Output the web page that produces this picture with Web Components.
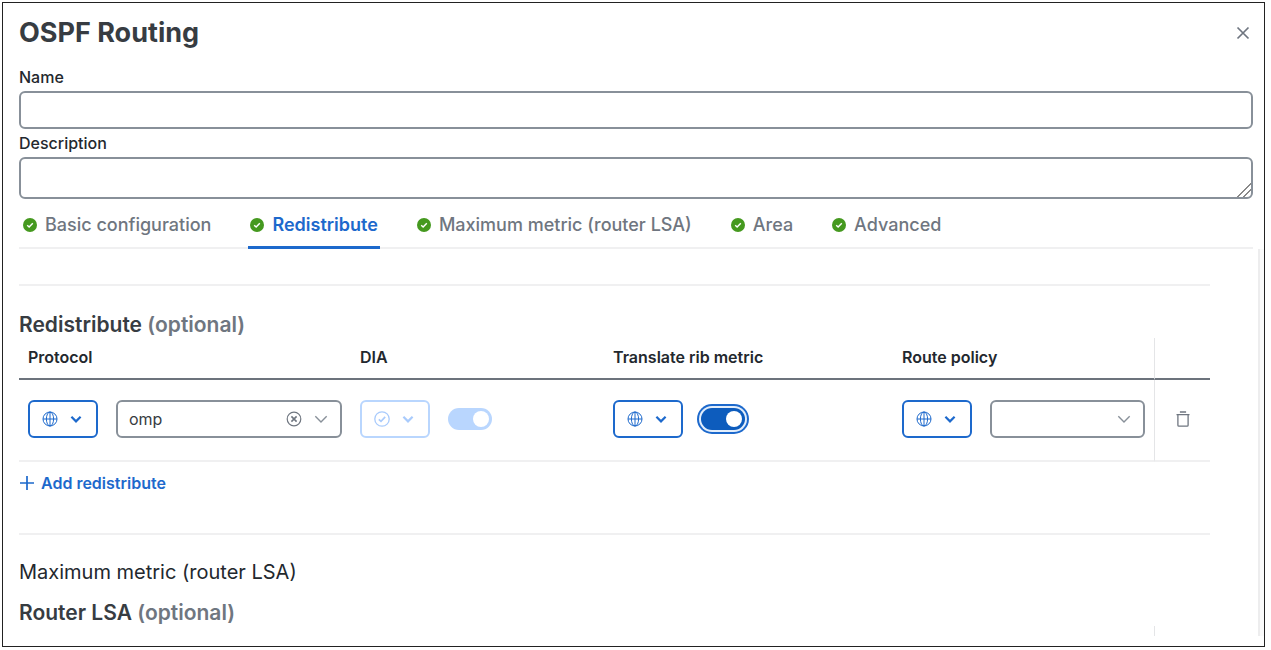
<!DOCTYPE html>
<html lang="en">
<head>
  <meta charset="utf-8">
  <title>OSPF Routing</title>
  <style>
    body {
      --blue: #1d69cc;
      --blue-dark: #0d5cbd;
      --blue-light: #b9d6fe;
      --gray: #889099;
      --line: #f0f0f1;
      --text: #23282e;
      --muted: #6f7680;
      margin: 2px 6px 3px 2px;
      background: #fff;
      color: var(--text);
      font-family: Inter, "Liberation Sans", sans-serif;
    }
  </style>
</head>
<body>
  <ospf-dialog heading="OSPF Routing">
    <form-field slot="fields" label="Name"></form-field>
    <form-field slot="fields" label="Description" multiline></form-field>

    <status-tab slot="tabs">Basic configuration</status-tab>
    <status-tab slot="tabs" active>Redistribute</status-tab>
    <status-tab slot="tabs">Maximum metric (router LSA)</status-tab>
    <status-tab slot="tabs">Area</status-tab>
    <status-tab slot="tabs">Advanced</status-tab>

    <redistribute-section></redistribute-section>
    <metric-section></metric-section>
  </ospf-dialog>

  <script>
    const ICONS = {
      check: '<circle cx="8" cy="8" r="8" fill="#45991f" stroke="none"/><path d="M4.8 8.3l2.2 2.1 4.2-4.5" stroke="#fff" stroke-width="1.6"/>',
      checkCircle: '<circle cx="8" cy="8" r="7.2" stroke-width="1.3"/><path d="M4.8 8.3l2.2 2.1 4.2-4.5" stroke-width="1.6"/>',
      globe: '<circle cx="8" cy="8" r="7"/><ellipse cx="8" cy="8" rx="3.6" ry="7"/><path d="M1 8h14M8 1v14"/>',
      chevron: '<path d="M3.4 5.8L8 10.4l4.6-4.6" stroke-width="2.2"/>',
      chevronThin: '<path d="M1.5 4.8L8 11.3l6.5-6.5" stroke-width="1.6"/>',
      clear: '<circle cx="8" cy="8" r="6.8" stroke-width="1.2"/><path d="M5.4 5.4l5.2 5.2M10.6 5.4l-5.2 5.2" stroke-width="1.6"/>',
      close: '<path d="M2.5 2.5l11 11M13.5 2.5l-11 11" stroke-width="1.7"/>',
      plus: '<path d="M8 1v14M1 8h14" stroke-width="1.7"/>',
      trash: '<path d="M2.9 3.8v10.4a1 1 0 0 0 1 1h8.2a1 1 0 0 0 1-1V3.8M1.5 3.6h13M4.9 1h6.2" stroke-width="1.3"/>'
    };

    class UiIcon extends HTMLElement {
      constructor() {
        super();
        this.attachShadow({ mode: 'open' });
      }

      connectedCallback() {
        const size = this.getAttribute('size') || 16;
        this.shadowRoot.innerHTML = `
          <style>
            :host { display: inline-flex; flex: none; }
            svg { display: block; }
          </style>
          <svg width="${size}" height="${size}" viewBox="0 0 16 16" fill="none" stroke="currentColor" aria-hidden="true">
            ${ICONS[this.getAttribute('name')]}
          </svg>
        `;
      }
    }

    class OspfDialog extends HTMLElement {
      constructor() {
        super();
        const shadow = this.attachShadow({ mode: 'open' });
        shadow.innerHTML = `
          <style>
            :host {
              display: flex;
              flex-direction: column;
              box-sizing: border-box;
              min-height: calc(100vh - 5px);
              border: 1px solid #222;
              padding-bottom: 10px;
            }
            header {
              display: flex;
              align-items: center;
              justify-content: space-between;
              padding: 12px 13px 12px 16px;
            }
            h1 {
              margin: 0;
              font-size: 27px;
              line-height: 36px;
              font-weight: 700;
              color: #373c42;
            }
            button {
              display: flex;
              padding: 0;
              border: 0;
              background: none;
              color: var(--muted);
            }
            .fields {
              padding: 0 11px 0 16px;
            }
            nav {
              display: flex;
              gap: 35px;
              margin: 0 11px 0 16px;
              padding-left: 2px;
              border-bottom: 2px solid var(--line);
            }
            .body {
              display: flex;
              flex: 1;
            }
            .content {
              flex: 1;
              padding: 35px 48px 0 16px;
            }
            .track {
              width: 4px;
              background: #fafafa;
              border-left: 2px solid #ededee;
            }
          </style>
          <header>
            <h1>${this.getAttribute('heading')}</h1>
            <button type="button" aria-label="Close"><ui-icon name="close"></ui-icon></button>
          </header>
          <div class="fields"><slot name="fields"></slot></div>
          <nav role="tablist"><slot name="tabs"></slot></nav>
          <div class="body">
            <div class="content"><slot></slot></div>
            <div class="track"></div>
          </div>
        `;
      }
    }

    class FormField extends HTMLElement {
      constructor() {
        super();
        const shadow = this.attachShadow({ mode: 'open' });
        const control = this.hasAttribute('multiline')
          ? '<textarea id="control"></textarea>'
          : '<input id="control" type="text">';
        shadow.innerHTML = `
          <style>
            :host { display: block; }
            label {
              display: block;
              padding: 4px 0;
              font-size: 16px;
              line-height: 20px;
              font-weight: 550;
            }
            input, textarea {
              display: block;
              box-sizing: border-box;
              width: 100%;
              height: 38px;
              padding: 4px 12px;
              border: 2px solid var(--gray);
              border-radius: 6px;
              background: #fff;
              color: inherit;
              font: inherit;
            }
            textarea { height: 42px; }
            textarea::-webkit-resizer {
              background: linear-gradient(135deg, transparent 52%, #888 53%, #888 58%, transparent 59%,
                transparent 72%, #888 73%, #888 78%, transparent 79%);
            }
          </style>
          <label for="control">${this.getAttribute('label')}</label>
          ${control}
        `;
      }
    }

    class StatusTab extends HTMLElement {
      constructor() {
        super();
        const shadow = this.attachShadow({ mode: 'open' });
        shadow.innerHTML = `
          <style>
            :host {
              display: block;
              margin-bottom: -2px;
              border-bottom: 3px solid transparent;
              color: var(--muted);
              font-weight: 550;
            }
            :host([active]) {
              border-color: var(--blue);
              color: var(--blue);
              font-weight: 600;
            }
            button {
              display: flex;
              align-items: center;
              gap: 8px;
              padding: 14px 2px 9px 2px;
              border: 0;
              background: none;
              color: inherit;
              font: inherit;
              font-size: 18px;
              line-height: 24px;
              white-space: nowrap;
            }
          </style>
          <button type="button" role="tab" aria-selected="${this.hasAttribute('active')}">
            <ui-icon name="check" size="14"></ui-icon><slot></slot>
          </button>
        `;
      }
    }

    class ScopeButton extends HTMLElement {
      constructor() {
        super();
        const shadow = this.attachShadow({ mode: 'open' });
        const disabled = this.hasAttribute('disabled');
        shadow.innerHTML = `
          <style>
            :host { display: block; flex: none; }
            button {
              display: flex;
              align-items: center;
              justify-content: space-between;
              box-sizing: border-box;
              width: 70px;
              height: 38px;
              padding: 0 12px;
              border: 2px solid var(--blue);
              border-radius: 6px;
              background: #fff;
              color: var(--blue);
            }
            button:disabled {
              border-color: var(--blue-light);
              color: #a9cbfc;
            }
          </style>
          <button type="button" aria-haspopup="menu" aria-label="Value scope" ${disabled ? 'disabled' : ''}>
            <ui-icon name="${disabled ? 'checkCircle' : 'globe'}"></ui-icon>
            <ui-icon name="chevron"></ui-icon>
          </button>
        `;
      }
    }

    class SelectBox extends HTMLElement {
      constructor() {
        super();
        const shadow = this.attachShadow({ mode: 'open' });
        const value = this.getAttribute('value') || '';
        shadow.innerHTML = `
          <style>
            :host {
              display: flex;
              flex: 1;
              align-items: center;
              gap: 12px;
              box-sizing: border-box;
              min-width: 0;
              height: 38px;
              padding: 0 12px 0 11px;
              border: 2px solid var(--gray);
              border-radius: 6px;
              color: var(--gray);
            }
            select {
              flex: 1;
              min-width: 0;
              height: 100%;
              padding: 0;
              border: 0;
              appearance: none;
              background: none;
              color: #373c42;
              font: 400 16px/20px Inter, "Liberation Sans", sans-serif;
            }
            button {
              display: flex;
              padding: 0;
              border: 0;
              background: none;
              color: var(--muted);
            }
          </style>
          <select aria-label="${this.getAttribute('label')}"><option>${value}</option></select>
          ${value ? '<button type="button" aria-label="Clear"><ui-icon name="clear"></ui-icon></button>' : ''}
          <ui-icon name="chevronThin" size="14"></ui-icon>
        `;
      }
    }

    class ToggleSwitch extends HTMLElement {
      constructor() {
        super();
        const shadow = this.attachShadow({ mode: 'open' });
        shadow.innerHTML = `
          <style>
            :host { display: block; flex: none; }
            input {
              display: flex;
              align-items: center;
              justify-content: flex-end;
              box-sizing: border-box;
              width: 44px;
              height: 22px;
              margin: 0;
              padding: 0 3px;
              border-radius: 11px;
              appearance: none;
              background: var(--blue-dark);
            }
            input::before {
              content: "";
              width: 16px;
              height: 16px;
              border-radius: 50%;
              background: #fff;
            }
            input:disabled { background: var(--blue-light); }
            :host([highlight]) input {
              box-shadow: 0 0 0 2px #e3eefb, 0 0 0 4px var(--blue);
            }
          </style>
          <input type="checkbox" role="switch" checked aria-label="${this.getAttribute('label')}"
            ${this.hasAttribute('disabled') ? 'disabled' : ''}>
        `;
      }
    }

    class SectionHeading extends HTMLElement {
      constructor() {
        super();
        const shadow = this.attachShadow({ mode: 'open' });
        shadow.innerHTML = `
          <style>
            :host { display: block; }
            h2 {
              margin: 0;
              font-size: 21px;
              line-height: 26px;
              font-weight: 600;
              color: #373c42;
            }
            span { color: var(--muted); }
          </style>
          <h2><slot></slot> <span>(optional)</span></h2>
        `;
      }
    }

    class RedistributeSection extends HTMLElement {
      constructor() {
        super();
        const shadow = this.attachShadow({ mode: 'open' });
        shadow.innerHTML = `
          <style>
            :host {
              display: block;
              padding: 26px 0 39px;
              border-top: 2px solid var(--line);
            }
            table {
              width: 100%;
              table-layout: fixed;
              border-collapse: separate;
              border-spacing: 0;
            }
            .protocol { width: 332px; }
            .dia { width: 253px; }
            .metric { width: 289px; }
            .actions { width: 56px; }
            th {
              padding: 9px 9px 10px;
              border-bottom: 2px solid #6c737c;
              font-size: 16px;
              line-height: 21px;
              font-weight: 600;
              text-align: left;
            }
            td {
              height: 78px;
              padding: 0 9px 2px;
              border-bottom: 2px solid var(--line);
            }
            th:last-child, td:last-child {
              border-left: 1px solid #e4e5e7;
            }
            .cell {
              display: flex;
              align-items: center;
              gap: 18px;
            }
            button {
              display: flex;
              align-items: center;
              padding: 0;
              border: 0;
              background: none;
              color: var(--muted);
            }
            td button { margin: 0 auto; }
            .add {
              gap: 6px;
              margin-top: 10px;
              color: var(--blue);
              font: 600 16px/22px Inter, "Liberation Sans", sans-serif;
            }
          </style>
          <section-heading>Redistribute</section-heading>
          <table>
            <colgroup>
              <col class="protocol"><col class="dia"><col class="metric"><col><col class="actions">
            </colgroup>
            <thead>
              <tr>
                <th>Protocol</th>
                <th>DIA</th>
                <th>Translate rib metric</th>
                <th>Route policy</th>
                <th></th>
              </tr>
            </thead>
            <tbody>
              <tr>
                <td><div class="cell">
                  <scope-button></scope-button>
                  <select-box label="Protocol" value="omp"></select-box>
                </div></td>
                <td><div class="cell">
                  <scope-button disabled></scope-button>
                  <toggle-switch label="DIA" disabled></toggle-switch>
                </div></td>
                <td><div class="cell">
                  <scope-button></scope-button>
                  <toggle-switch label="Translate rib metric" highlight></toggle-switch>
                </div></td>
                <td><div class="cell">
                  <scope-button></scope-button>
                  <select-box label="Route policy"></select-box>
                </div></td>
                <td><button type="button" aria-label="Delete row"><ui-icon name="trash"></ui-icon></button></td>
              </tr>
            </tbody>
          </table>
          <button type="button" class="add"><ui-icon name="plus"></ui-icon>Add redistribute</button>
        `;
      }
    }

    class MetricSection extends HTMLElement {
      constructor() {
        super();
        const shadow = this.attachShadow({ mode: 'open' });
        shadow.innerHTML = `
          <style>
            :host {
              display: block;
              padding-top: 24px;
              border-top: 2px solid var(--line);
            }
            h2 {
              margin: 0 0 15px;
              font-size: 20px;
              line-height: 26px;
              font-weight: 400;
            }
            /* top edge of the router LSA table, only its action column shows */
            .table-top {
              display: flex;
              justify-content: flex-end;
            }
            .table-top div {
              width: 55px;
              height: 10px;
              border-left: 1px solid #e4e5e7;
            }
          </style>
          <h2>Maximum metric (router LSA)</h2>
          <section-heading>Router LSA</section-heading>
          <div class="table-top"><div></div></div>
        `;
      }
    }

    customElements.define('ui-icon', UiIcon);
    customElements.define('form-field', FormField);
    customElements.define('status-tab', StatusTab);
    customElements.define('scope-button', ScopeButton);
    customElements.define('select-box', SelectBox);
    customElements.define('toggle-switch', ToggleSwitch);
    customElements.define('section-heading', SectionHeading);
    customElements.define('redistribute-section', RedistributeSection);
    customElements.define('metric-section', MetricSection);
    customElements.define('ospf-dialog', OspfDialog);
  </script>
</body>
</html>
